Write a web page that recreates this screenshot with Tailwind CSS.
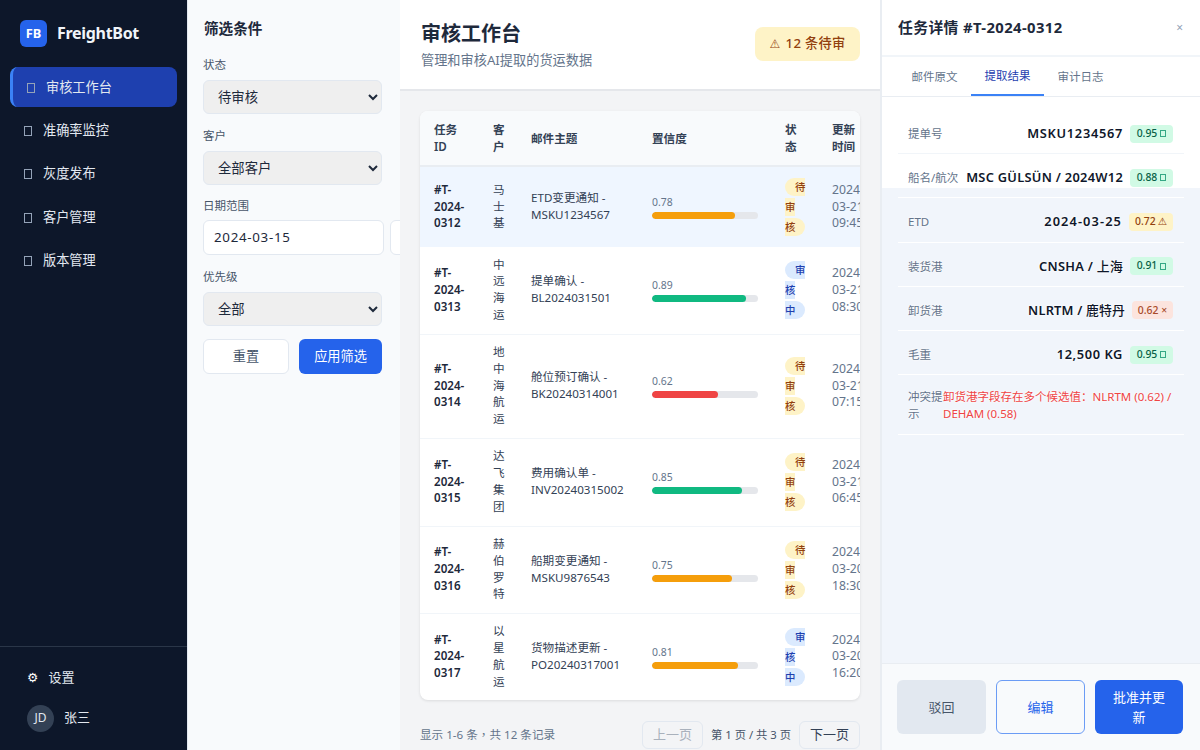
<!DOCTYPE html>
<html><head><meta charset="utf-8"><script src="https://cdn.jsdelivr.net/npm/@tailwindcss/browser@4"></script></head>
<body class="m-0 h-[750px] w-[1200px] overflow-hidden font-['Noto_Sans','Noto_Sans_CJK_SC',sans-serif] text-[#1e293b] bg-[#f3f4f6]">
<div class="flex h-[750px] w-[1200px]">
<aside class="flex w-[187px] shrink-0 flex-col bg-[#0d172a] text-[#e2e8f0]">
  <div class="flex h-[67.2px] shrink-0 items-center gap-[10px] pl-[20px] pb-[1px]">
    <div class="flex h-[27px] w-[27px] items-center justify-center rounded-[6px] bg-[#2563eb] text-[12.8px] font-bold text-white">FB</div>
    <div class="text-[16px] font-bold tracking-[-0.3px] text-[#f1f5f9]">FreightBot</div>
  </div>
  <nav class="flex flex-col gap-[3.73px] px-[10px] text-[13.2px]">
    <a class="flex h-[39.6px] items-center gap-[11px] rounded-[8px] border-l-[3px] border-[#3b82f6] bg-[#1e40af] pl-[14px] pt-[1.5px] text-[#e2e8f0]"><span class="h-[10px] w-[8px] border border-[#94a3b8]"></span><span>审核工作台</span></a>
    <a class="flex h-[39.6px] items-center gap-[11px] pl-[14px] pt-[1.5px]"><span class="h-[10px] w-[8px] border border-[#94a3b8]"></span><span>准确率监控</span></a>
    <a class="flex h-[39.6px] items-center gap-[11px] pl-[14px] pt-[1.5px]"><span class="h-[10px] w-[8px] border border-[#94a3b8]"></span><span>灰度发布</span></a>
    <a class="flex h-[39.6px] items-center gap-[11px] pl-[14px] pt-[1.5px]"><span class="h-[10px] w-[8px] border border-[#94a3b8]"></span><span>客户管理</span></a>
    <a class="flex h-[39.6px] items-center gap-[11px] pl-[14px] pt-[1.5px]"><span class="h-[10px] w-[8px] border border-[#94a3b8]"></span><span>版本管理</span></a>
  </nav>
  <div class="mt-auto h-[104px] border-t border-[#2a3648] pl-[27px] text-[13px]">
    <div class="mt-[21px] flex items-center gap-[10px]"><span class="font-['DejaVu_Sans'] text-[12.8px] text-white">⚙</span><span>设置</span></div>
    <div class="mt-[17px] flex items-center gap-[10px]"><div class="flex h-[27px] w-[27px] items-center justify-center rounded-full bg-[#334155] text-[12px]">JD</div><span>张三</span></div>
  </div>
</aside>
<section class="w-[213px] shrink-0 overflow-hidden border-l border-[#e2e8f0] bg-[#f8fafc] pl-[15px] pr-[17px]">
  <h2 class="mt-[18px] pl-[1px] text-[14.6px] leading-[20px] font-bold text-[#1e293b]">筛选条件</h2>
  <div class="mt-[19px] text-[11.5px] leading-[16px] text-[#475569]">状态</div>
  <select class="mt-[7px] block h-[34px] w-[179px] rounded-[6px] border-[1.5px] border-[#e2e8f0] bg-[#efefef] pl-[10px] text-[13.33px] text-[#1e293b]"><option>待审核</option></select>
  <div class="mt-[14px] text-[11.5px] leading-[16px] text-[#475569]">客户</div>
  <select class="mt-[7px] block h-[34px] w-[179px] rounded-[6px] border-[1.5px] border-[#e2e8f0] bg-[#efefef] pl-[10px] text-[13.33px] text-[#1e293b]"><option>全部客户</option></select>
  <div class="mt-[13px] text-[11.5px] leading-[16px] text-[#475569]">日期范围</div>
  <div class="mt-[6px] flex w-[260px] gap-[6px]">
    <div class="flex h-[35px] w-[181px] shrink-0 items-center rounded-[6px] border-[1.5px] border-[#e2e8f0] bg-white pl-[10px] text-[13.33px] tracking-[0.7px]">2024-03-15</div>
    <div class="h-[35px] w-[60px] shrink-0 rounded-[6px] border-[1.5px] border-[#e2e8f0] bg-white"></div>
  </div>
  <div class="mt-[14px] text-[11.5px] leading-[16px] text-[#475569]">优先级</div>
  <select class="mt-[7px] block h-[34px] w-[179px] rounded-[6px] border-[1.5px] border-[#e2e8f0] bg-[#efefef] pl-[10px] text-[13.33px] text-[#1e293b]"><option>全部</option></select>
  <div class="mt-[13px] flex w-[179px] gap-[10px]">
    <button class="h-[35px] w-[86px] rounded-[6px] border-[1.5px] border-[#e2e8f0] bg-white text-[13.2px] text-[#475569]">重置</button>
    <button class="h-[35px] flex-1 rounded-[6px] bg-[#2563eb] text-[13.2px] text-white">应用筛选</button>
  </div>
</section>
<main class="flex w-[480px] shrink-0 flex-col">
  <header class="flex h-[91px] shrink-0 items-center justify-between border-b-2 border-[#e5e7eb] bg-white pl-[21px] pr-[20px]">
    <div>
      <h1 class="text-[20px] leading-[28px] font-bold text-[#1e293b]">审核工作台</h1>
      <p class="mt-[3px] text-[13.2px] leading-[18px] text-[#64748b]">管理和审核AI提取的货运数据</p>
    </div>
    <div class="mb-[1px] flex h-[34px] w-[105px] items-center justify-center gap-[5px] rounded-[8px] bg-[#fef3c7] text-[13.2px] font-medium tracking-[0.3px] text-[#92400e]"><span class="font-['DejaVu_Sans'] text-[12px] font-normal">⚠</span><span>12 条待审</span></div>
  </header>
  <div class="mx-[20px] mt-[20px] h-[589px] overflow-hidden rounded-[8px] bg-white shadow-[0_1px_3px_rgba(0,0,0,0.1)]">
    <table class="w-[440px] table-fixed border-collapse text-[11.6px] leading-[16.8px]">
      <colgroup><col class="w-[59px]"><col class="w-[38px]"><col class="w-[121px]"><col class="w-[133px]"><col class="w-[47px]"><col class="w-[42px]"></colgroup>
      <thead class="bg-[#f8fafc] text-left text-[#334155]">
        <tr class="h-[55px] border-b-2 border-[#e9edf2]">
          <th class="px-[14px] pt-[2px] font-semibold">任务ID</th><th class="px-[14px] pt-[2px] font-semibold">客户</th><th class="px-[14px] pt-[2px] font-semibold">邮件主题</th><th class="px-[14px] pt-[2px] font-semibold">置信度</th><th class="px-[14px] pt-[2px] font-semibold">状态</th><th class="pl-[14px] pt-[2px] font-semibold">更新时间</th>
        </tr>
      </thead>
      <tbody>
        <tr class="h-[81px] bg-[#eff6ff] text-[#334155]">
          <td class="px-[14px] font-semibold text-[#1e293b]">#T-2024-0312</td><td class="px-[14px]">马士基</td><td class="px-[14px]">ETD变更通知 - MSKU1234567</td>
          <td class="px-[14px]"><div class="text-[10.4px] leading-[14px] text-[#64748b]">0.78</div><div class="mt-[3px] h-[7px] w-[106px] overflow-hidden rounded bg-[#e5e7eb]"><div class="h-full w-[78%] rounded bg-[#f59e0b]"></div></div></td>
          <td class="pl-[14px] leading-[20px]"><div class="w-[20.6px]"><span class="rounded-full bg-[#fef3c7] px-[10px] py-[2px] text-[10.4px] font-medium text-[#92400e]">待审核</span></div></td>
          <td class="pl-[14px] text-[12.2px] text-[#64748b]"><div class="w-[60px]">2024-<br>03-21<br>09:45</div></td>
        </tr>
        <tr class="h-[87px] border-b border-[#f1f5f9] text-[#334155]">
          <td class="px-[14px] font-semibold text-[#1e293b]">#T-2024-0313</td><td class="px-[14px]">中远海运</td><td class="px-[14px]">提单确认 - BL2024031501</td>
          <td class="px-[14px]"><div class="text-[10.4px] leading-[14px] text-[#64748b]">0.89</div><div class="mt-[3px] h-[7px] w-[106px] overflow-hidden rounded bg-[#e5e7eb]"><div class="h-full w-[89%] rounded bg-[#10b981]"></div></div></td>
          <td class="pl-[14px] leading-[20px]"><div class="w-[20.6px]"><span class="rounded-full bg-[#dbeafe] px-[10px] py-[2px] text-[10.4px] font-medium text-[#1e40af]">审核中</span></div></td>
          <td class="pl-[14px] text-[12.2px] text-[#64748b]"><div class="w-[60px]">2024-<br>03-21<br>08:30</div></td>
        </tr>
        <tr class="h-[104px] border-b border-[#f1f5f9] text-[#334155]">
          <td class="px-[14px] font-semibold text-[#1e293b]">#T-2024-0314</td><td class="px-[14px]">地中海航运</td><td class="px-[14px]">舱位预订确认 - BK20240314001</td>
          <td class="px-[14px]"><div class="text-[10.4px] leading-[14px] text-[#64748b]">0.62</div><div class="mt-[3px] h-[7px] w-[106px] overflow-hidden rounded bg-[#e5e7eb]"><div class="h-full w-[62%] rounded bg-[#ef4444]"></div></div></td>
          <td class="pl-[14px] leading-[20px]"><div class="w-[20.6px]"><span class="rounded-full bg-[#fef3c7] px-[10px] py-[2px] text-[10.4px] font-medium text-[#92400e]">待审核</span></div></td>
          <td class="pl-[14px] text-[12.2px] text-[#64748b]"><div class="w-[60px]">2024-<br>03-21<br>07:15</div></td>
        </tr>
        <tr class="h-[88px] border-b border-[#f1f5f9] text-[#334155]">
          <td class="px-[14px] font-semibold text-[#1e293b]">#T-2024-0315</td><td class="px-[14px]">达飞集团</td><td class="px-[14px]">费用确认单 - INV20240315002</td>
          <td class="px-[14px]"><div class="text-[10.4px] leading-[14px] text-[#64748b]">0.85</div><div class="mt-[3px] h-[7px] w-[106px] overflow-hidden rounded bg-[#e5e7eb]"><div class="h-full w-[85%] rounded bg-[#10b981]"></div></div></td>
          <td class="pl-[14px] leading-[20px]"><div class="w-[20.6px]"><span class="rounded-full bg-[#fef3c7] px-[10px] py-[2px] text-[10.4px] font-medium text-[#92400e]">待审核</span></div></td>
          <td class="pl-[14px] text-[12.2px] text-[#64748b]"><div class="w-[60px]">2024-<br>03-21<br>06:45</div></td>
        </tr>
        <tr class="h-[87px] border-b border-[#f1f5f9] text-[#334155]">
          <td class="px-[14px] font-semibold text-[#1e293b]">#T-2024-0316</td><td class="px-[14px]">赫伯罗特</td><td class="px-[14px]">船期变更通知 - MSKU9876543</td>
          <td class="px-[14px]"><div class="text-[10.4px] leading-[14px] text-[#64748b]">0.75</div><div class="mt-[3px] h-[7px] w-[106px] overflow-hidden rounded bg-[#e5e7eb]"><div class="h-full w-[75%] rounded bg-[#f59e0b]"></div></div></td>
          <td class="pl-[14px] leading-[20px]"><div class="w-[20.6px]"><span class="rounded-full bg-[#fef3c7] px-[10px] py-[2px] text-[10.4px] font-medium text-[#92400e]">待审核</span></div></td>
          <td class="pl-[14px] text-[12.2px] text-[#64748b]"><div class="w-[60px]">2024-<br>03-20<br>18:30</div></td>
        </tr>
        <tr class="h-[87px] text-[#334155]">
          <td class="px-[14px] font-semibold text-[#1e293b]">#T-2024-0317</td><td class="px-[14px]">以星航运</td><td class="px-[14px]">货物描述更新 - PO20240317001</td>
          <td class="px-[14px]"><div class="text-[10.4px] leading-[14px] text-[#64748b]">0.81</div><div class="mt-[3px] h-[7px] w-[106px] overflow-hidden rounded bg-[#e5e7eb]"><div class="h-full w-[81%] rounded bg-[#f59e0b]"></div></div></td>
          <td class="pl-[14px] leading-[20px]"><div class="w-[20.6px]"><span class="rounded-full bg-[#dbeafe] px-[10px] py-[2px] text-[10.4px] font-medium text-[#1e40af]">审核中</span></div></td>
          <td class="pl-[14px] text-[12.2px] text-[#64748b]"><div class="w-[60px]">2024-<br>03-20<br>16:20</div></td>
        </tr>
      </tbody>
    </table>
  </div>
  <div class="mx-[20px] mt-[21px] flex items-center justify-between text-[11.6px] text-[#64748b]">
    <span>显示 1-6 条<span lang="zh-Hant" class="font-['Noto_Sans_CJK_TC']">，</span>共 12 条记录</span>
    <div class="flex items-center gap-[8px]">
      <button class="h-[28px] w-[61px] rounded-[6px] border-[1.5px] border-[#e2e8f0] text-[13px] text-[#a9b1bc]">上一页</button>
      <span class="text-[11.3px] text-[#475569]">第 1 页 / 共 3 页</span>
      <button class="h-[28px] w-[61px] rounded-[6px] border-[1.5px] border-[#e2e8f0] text-[13px] text-[#334155]">下一页</button>
    </div>
  </div>
</main>
<aside class="flex w-[320px] shrink-0 flex-col border-l-2 border-[#e9edf2] bg-white">
  <div class="flex h-[57px] shrink-0 items-center justify-between border-b-2 border-[#f1f5f9] pl-[16px] pr-[17px]">
    <h3 class="text-[14.8px] font-bold tracking-[0.4px] text-[#1e293b]">任务详情 #T-2024-0312</h3><span class="text-[12px] text-[#94a3b8]">×</span>
  </div>
  <div class="flex h-[40px] shrink-0 border-b border-[#e9edf2] pl-[16px] text-[11.5px] text-[#64748b]">
    <div class="flex w-[73px] items-center justify-center pt-[1px]">邮件原文</div>
    <div class="flex w-[73px] items-center justify-center border-b-2 border-[#3b82f6] pt-[1px] text-[#1e40af]">提取结果</div>
    <div class="flex w-[73px] items-center justify-center pt-[1px]">审计日志</div>
  </div>
  <div class="flex-1 bg-[linear-gradient(#fff_91px,#f1f5fb_91px)] px-[16px] pt-[13px]">
    <div class="flex h-[44.2px] items-center justify-between border-b border-[#f1f5f9] pl-[10px] pr-[11px] pt-[4px]"><span class="text-[11.5px] text-[#64748b]">提单号</span><div class="flex items-center gap-[7px]"><span class="text-[12.8px] font-semibold tracking-[0.7px] text-[#0f172a]">MSKU1234567</span><span class="flex h-[18px] w-[43px] items-center justify-center gap-[3px] rounded-[4px] bg-[#d1fae5] text-[10.4px] font-medium text-[#065f46]">0.95<span class="h-[7px] w-[6px] border border-[#34a885]"></span></span></div></div>
    <div class="flex h-[44.2px] items-center justify-between border-b border-white pl-[10px] pr-[11px] pt-[4px]"><span class="text-[11.5px] text-[#64748b]">船名/航次</span><div class="flex items-center gap-[7px]"><span class="text-[12.8px] font-semibold tracking-[0.3px] text-[#0f172a]">MSC GÜLSÜN / 2024W12</span><span class="flex h-[18px] w-[43px] items-center justify-center gap-[3px] rounded-[4px] bg-[#d1fae5] text-[10.4px] font-medium text-[#065f46]">0.88<span class="h-[7px] w-[6px] border border-[#34a885]"></span></span></div></div>
    <div class="flex h-[44.2px] items-center justify-between border-b border-white pl-[10px] pr-[11px] pt-[4px]"><span class="text-[11.5px] text-[#64748b] [text-shadow:0_0_3px_#fff,0_0_3px_#fff]">ETD</span><div class="flex items-center gap-[7px]"><span class="text-[12.8px] font-semibold tracking-[1.1px] text-[#0f172a] [text-shadow:0_0_3px_#fff,0_0_3px_#fff]">2024-03-25</span><span class="flex h-[18px] w-[44px] items-center justify-center gap-[2px] rounded-[4px] bg-[#fef3c7] text-[10.4px] font-medium text-[#92400e]">0.72 <span class="font-['DejaVu_Sans'] font-normal">⚠</span></span></div></div>
    <div class="flex h-[44.2px] items-center justify-between border-b border-white pl-[10px] pr-[11px] pt-[4px]"><span class="text-[11.5px] text-[#64748b] [text-shadow:0_0_3px_#fff,0_0_3px_#fff]">装货港</span><div class="flex items-center gap-[7px]"><span class="text-[12.8px] font-semibold tracking-[0.3px] text-[#0f172a] [text-shadow:0_0_3px_#fff,0_0_3px_#fff]">CNSHA / <span class="font-medium">上海</span></span><span class="flex h-[18px] w-[43px] items-center justify-center gap-[3px] rounded-[4px] bg-[#d1fae5] text-[10.4px] font-medium text-[#065f46]">0.91<span class="h-[7px] w-[6px] border border-[#34a885]"></span></span></div></div>
    <div class="flex h-[44.2px] items-center justify-between border-b border-white pl-[10px] pr-[11px] pt-[4px]"><span class="text-[11.5px] text-[#64748b] [text-shadow:0_0_3px_#fff,0_0_3px_#fff]">卸货港</span><div class="flex items-center gap-[7px]"><span class="text-[12.8px] font-semibold tracking-[0.2px] text-[#0f172a] [text-shadow:0_0_3px_#fff,0_0_3px_#fff]">NLRTM / <span class="font-medium">鹿特丹</span></span><span class="flex h-[18px] w-[41px] items-center justify-center gap-[2px] rounded-[4px] bg-[#fce4de] text-[10.4px] font-medium text-[#a84a2a]">0.62 ×</span></div></div>
    <div class="flex h-[44.2px] items-center justify-between border-b border-white pl-[10px] pr-[11px] pt-[4px]"><span class="text-[11.5px] text-[#64748b] [text-shadow:0_0_3px_#fff,0_0_3px_#fff]">毛重</span><div class="flex items-center gap-[7px]"><span class="text-[12.8px] font-semibold tracking-[0.6px] text-[#0f172a] [text-shadow:0_0_3px_#fff,0_0_3px_#fff]">12,500 KG</span><span class="flex h-[18px] w-[43px] items-center justify-center gap-[3px] rounded-[4px] bg-[#d1fae5] text-[10.4px] font-medium text-[#065f46]">0.95<span class="h-[7px] w-[6px] border border-[#34a885]"></span></span></div></div>
    <div class="flex h-[60px] items-center border-b border-white pl-[10px] pr-[10px] pt-[3px] text-[11.5px] leading-[16.8px]"><span class="w-[35px] shrink-0 text-[#64748b] [text-shadow:0_0_3px_#fff,0_0_3px_#fff]">冲突提示</span><span class="text-[#ef4444] [text-shadow:0_0_3px_#fff,0_0_3px_#fff]">卸货港字段存在多个候选值：NLRTM (0.62) / DEHAM (0.58)</span></div>
  </div>
  <div class="flex h-[87px] shrink-0 gap-[10px] border-t border-[#e9edf2] bg-[#f8fafc] pl-[15px] pt-[16px] text-[13px] leading-[20px]">
    <button class="h-[54px] w-[89px] rounded-[6px] bg-[#e2e8f0] text-[#475569]">驳回</button>
    <button class="h-[54px] w-[89px] rounded-[6px] border-[1.5px] border-[#6b9cf5] text-[#2563eb]">编辑</button>
    <button class="h-[54px] w-[88px] rounded-[6px] bg-[#2563eb] px-[16px] text-white">批准并更新</button>
  </div>
</aside>
</div>
</body></html>
